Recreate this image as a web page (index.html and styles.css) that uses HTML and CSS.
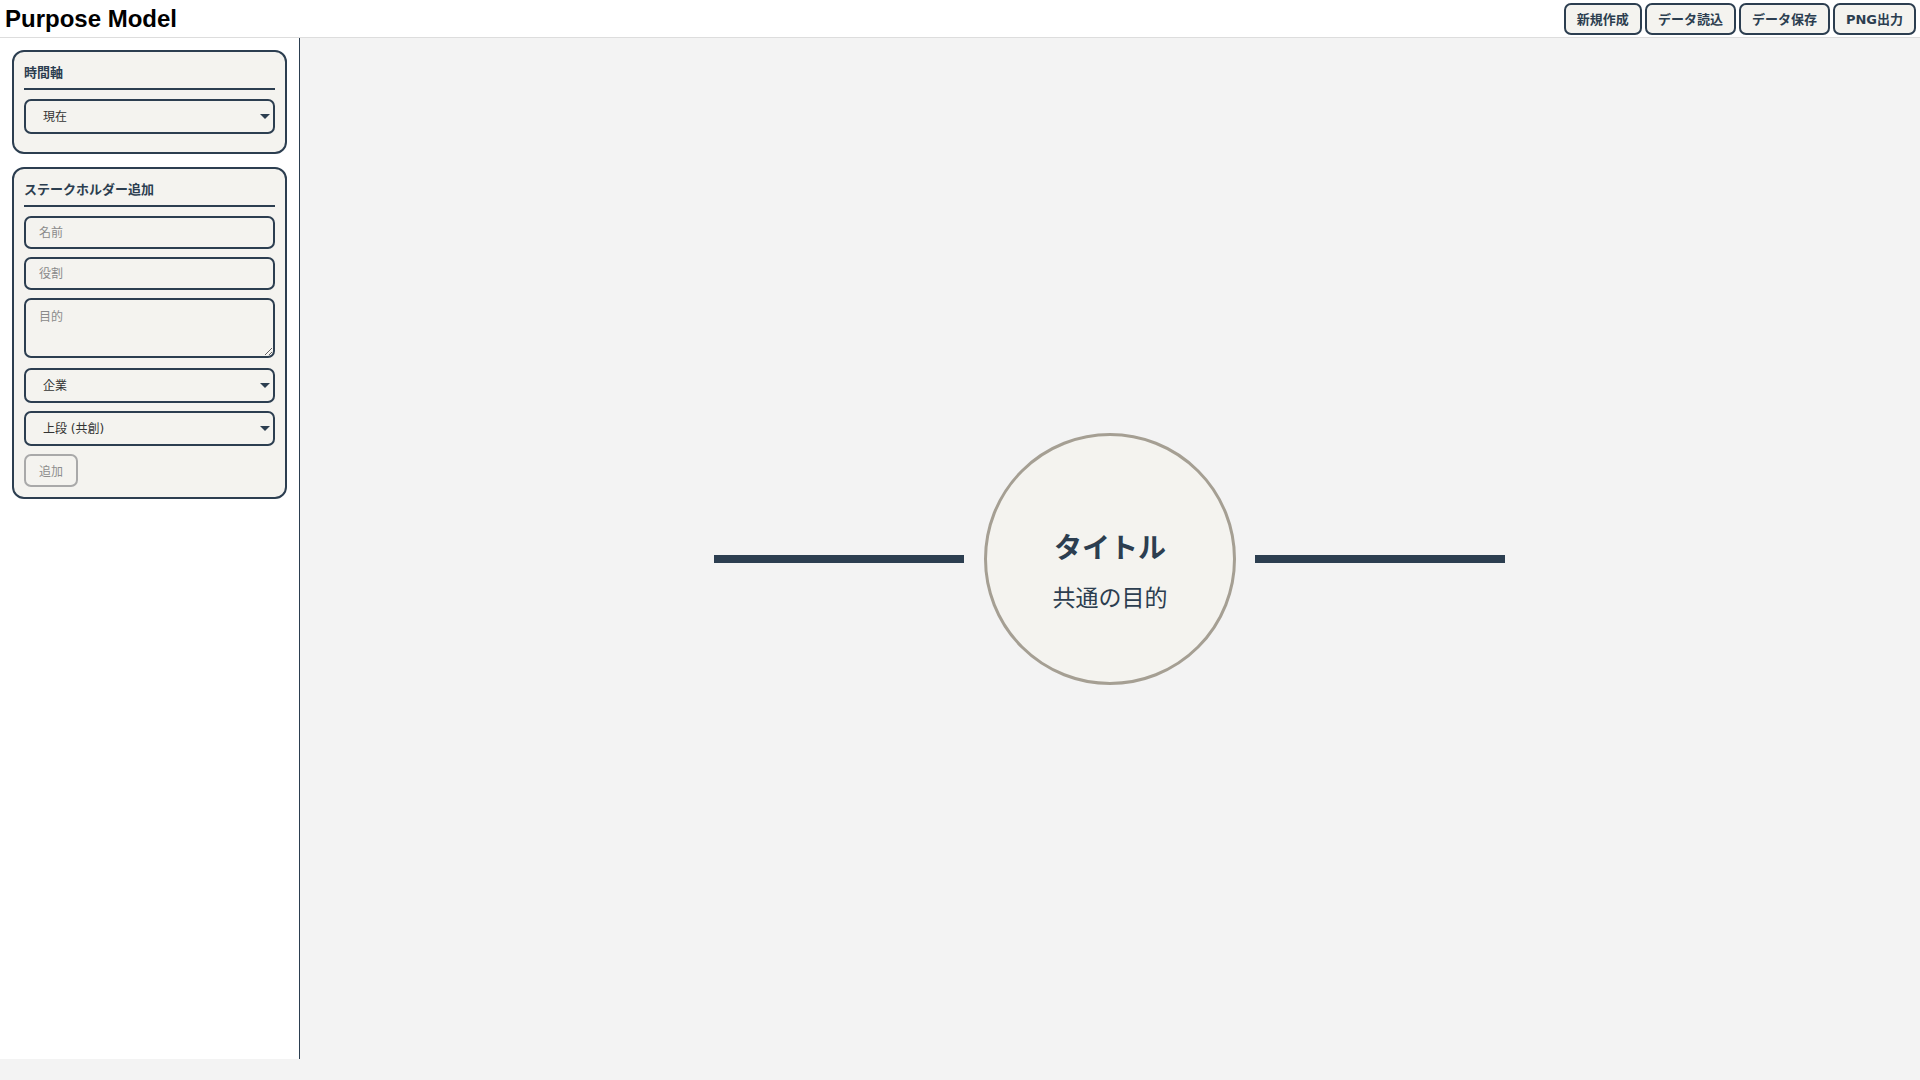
FILE: index.html
```html
<!DOCTYPE html>
<html lang="ja">
<head>
<meta charset="utf-8">
<title>Purpose Model</title>
<link rel="stylesheet" href="styles.css">
</head>
<body>
<header class="topbar">
  <h1 class="app-title">Purpose Model</h1>
  <div class="toolbar">
    <button class="tool-btn" type="button">新規作成</button>
    <button class="tool-btn" type="button">データ読込</button>
    <button class="tool-btn" type="button">データ保存</button>
    <button class="tool-btn" type="button">PNG出力</button>
  </div>
</header>
<div class="main">
  <aside class="sidebar">
    <section class="panel">
      <h3 class="panel-title">時間軸</h3>
      <div class="select-wrap">
        <select class="field select">
          <option>現在</option>
        </select>
      </div>
    </section>
    <section class="panel">
      <h3 class="panel-title">ステークホルダー追加</h3>
      <input class="field input" type="text" placeholder="名前">
      <input class="field input" type="text" placeholder="役割">
      <textarea class="field textarea" placeholder="目的"></textarea>
      <div class="select-wrap">
        <select class="field select">
          <option>企業</option>
        </select>
      </div>
      <div class="select-wrap">
        <select class="field select">
          <option>上段 (共創)</option>
        </select>
      </div>
      <button class="add-btn" type="button" disabled>追加</button>
    </section>
  </aside>
  <main class="canvas">
    <svg class="diagram" width="100%" height="100%">
      <svg x="50%" y="50%" overflow="visible">
        <line x1="-396" y1="0" x2="-146" y2="0" class="axis"/>
        <line x1="145" y1="0" x2="395" y2="0" class="axis"/>
        <circle cx="0" cy="0" r="124.5" class="core"/>
        <text x="0" y="-1" class="core-title" text-anchor="middle">タイトル</text>
        <text x="0" y="47" class="core-sub" text-anchor="middle">共通の目的</text>
      </svg>
    </svg>
  </main>
</div>
</body>
</html>
```

FILE: styles.css
```css
* { box-sizing: border-box; }

html, body {
  margin: 0;
  padding: 0;
  height: 100%;
}

body {
  background: #f3f3f3;
  font-family: "DejaVu Sans", "Noto Sans CJK JP", sans-serif;
  color: #2c3e50;
  overflow: hidden;
}

.topbar {
  height: 38px;
  background: #ffffff;
  border-bottom: 1px solid #dddddd;
  display: flex;
  align-items: center;
  justify-content: space-between;
  padding: 0 4px 0 5px;
}

.app-title {
  margin: 0;
  font-family: "Liberation Sans", Arial, sans-serif;
  font-size: 24px;
  font-weight: bold;
  color: #000000;
  line-height: 28px;
}

.toolbar {
  display: flex;
  gap: 3px;
}

.tool-btn {
  height: 32px;
  padding: 0 11px;
  border: 2px solid #2c3e50;
  border-radius: 7px;
  background: #f4f3ef;
  color: #2c3e50;
  font-family: "DejaVu Sans", "Noto Sans CJK JP", sans-serif;
  font-size: 13px;
  font-weight: bold;
  cursor: pointer;
}

.main {
  display: flex;
  height: calc(100vh - 38px);
}

.sidebar {
  width: 300px;
  flex: none;
  align-self: flex-start;
  height: calc(100vh - 59px);
  background: #ffffff;
  border-right: 1px solid #2c3e50;
  padding: 12px;
}

.panel {
  background: #f4f3ef;
  border: 2px solid #2c3e50;
  border-radius: 12px;
  padding: 10px;
  margin-bottom: 13px;
  display: flex;
  flex-direction: column;
}

.panel-title {
  margin: 0 0 9px;
  font-size: 13px;
  font-weight: bold;
  line-height: 21px;
  padding-bottom: 5px;
  border-bottom: 2px solid #2c3e50;
  color: #2c3e50;
}

.field {
  width: 100%;
  border: 2px solid #2c3e50;
  border-radius: 7px;
  background: #f4f3ef;
  font-family: "DejaVu Sans", "Noto Sans CJK JP", sans-serif;
  font-size: 12px;
  color: #333333;
  margin: 0 0 8px;
  outline: none;
}

.input {
  height: 33px;
  padding: 0 13px;
}

.textarea {
  height: 60px;
  padding: 7px 13px;
  margin-bottom: 10px;
  resize: vertical;
  display: block;
}

.field::placeholder {
  color: #8a8a8a;
}

.select-wrap {
  position: relative;
}

.select-wrap::after {
  content: "";
  position: absolute;
  right: 5px;
  top: 15px;
  border-left: 5px solid transparent;
  border-right: 5px solid transparent;
  border-top: 5px solid #2c3e50;
  pointer-events: none;
}

.select {
  height: 35px;
  padding: 0 24px 0 17px;
  appearance: none;
  -webkit-appearance: none;
  display: block;
}

.add-btn {
  align-self: flex-start;
  height: 33px;
  padding: 0 13px;
  border: 2px solid #a9a9a9;
  border-radius: 7px;
  background: #f4f3ef;
  color: #8d8d8d;
  font-family: "DejaVu Sans", "Noto Sans CJK JP", sans-serif;
  font-size: 12px;
}

.canvas {
  flex: 1;
  display: block;
  height: 100%;
}

.diagram {
  display: block;
}

.axis {
  stroke: #2c3e50;
  stroke-width: 8;
}

.core {
  fill: #f4f3ef;
  stroke: #a59f93;
  stroke-width: 3;
}

.core-title {
  font-family: "DejaVu Sans", "Noto Sans CJK JP", sans-serif;
  font-size: 28px;
  font-weight: bold;
  fill: #2c3e50;
}

.core-sub {
  font-family: "DejaVu Sans", "Noto Sans CJK JP", sans-serif;
  font-size: 23px;
  fill: #2c3e50;
}
```
